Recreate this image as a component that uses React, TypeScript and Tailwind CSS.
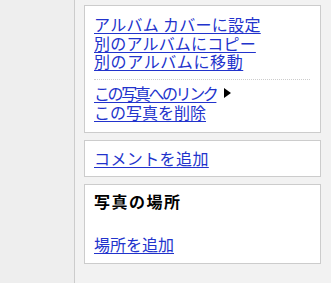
const font = { fontFamily: '"Noto Sans CJK JP", "Noto Sans", sans-serif' };

function A({ children, className = "" }: { children: React.ReactNode; className?: string }) {
  return (
    <a href="#" className={`inline-block h-[18.5px] text-[#2233cc] underline underline-offset-2 decoration-1 ${className}`}>
      {children}
    </a>
  );
}

export default function App() {
  return (
    <div className="flex h-[283px] w-[331px] bg-[#f2f2f2] text-[16px]" style={font}>
      <div className="w-[75px] shrink-0 bg-[#eeeeee] border-r border-[#cccccc]" />
      <div className="flex flex-col gap-[7px] pl-[9px] pt-[5px] w-[246px]">
        <div className="border border-[#cccccc] bg-white h-[128px] pl-[9px] pr-[10px] pt-[9px] leading-[18.5px]">
          <div className="flex flex-col">
            <div className="h-[18.5px]"><A className="tracking-[0.3px]">アルバム カバーに設定</A></div>
            <div className="h-[18.5px]"><A className="tracking-[0.2px]">別のアルバムにコピー</A></div>
            <div className="h-[18.5px]"><A className="tracking-[0.6px]">別のアルバムに移動</A></div>
          </div>
          <div className="border-t border-dotted border-[#cccccc] mt-[8px] mb-[4px]" />
          <div className="flex items-center gap-[8px] h-[19px]">
            <A className="tracking-[-2.4px]">この写真へのリンク</A>
            <span className="inline-block w-0 h-0 border-y-[5px] border-y-transparent border-l-[7px] border-l-black" />
          </div>
          <div className="h-[18.5px]"><A>この写真を削除</A></div>
        </div>
        <div className="border border-[#cccccc] bg-white h-[37px] pl-[9px] pt-[8px] leading-[18.5px]">
          <A className="tracking-[0.4px]">コメントを追加</A>
        </div>
        <div className="border border-[#cccccc] bg-white h-[80px] pl-[9px] pt-[7px] leading-[18.5px]">
          <div className="font-bold text-black tracking-[1.5px]">写真の場所</div>
          <div className="mt-[24px]"><A>場所を追加</A></div>
        </div>
      </div>
    </div>
  );
}
